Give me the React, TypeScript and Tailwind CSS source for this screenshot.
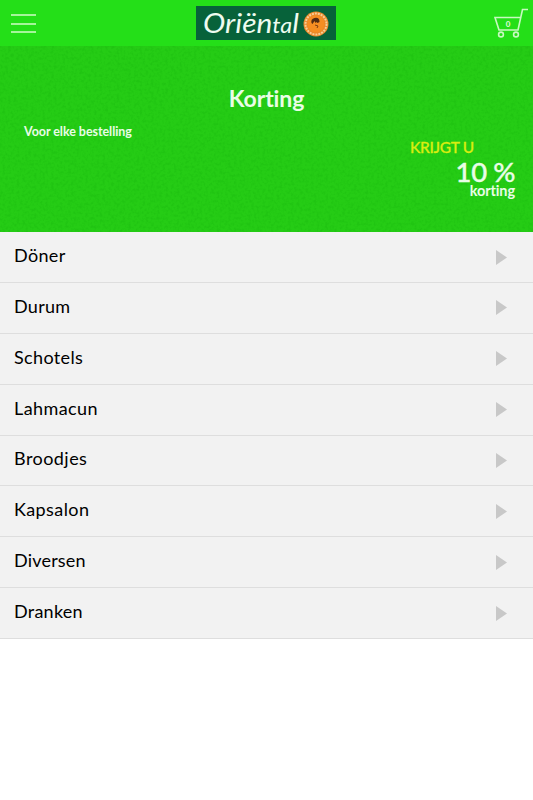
const categories = [
  { name: 'Döner', className: 'tracking-[0.35px]' },
  { name: 'Durum', className: 'tracking-[0.3px]' },
  { name: 'Schotels', className: 'tracking-[0.35px]' },
  { name: 'Lahmacun', className: 'tracking-[0.4px]' },
  { name: 'Broodjes', className: 'tracking-[0.45px]' },
  { name: 'Kapsalon', className: 'tracking-[0.4px]' },
  { name: 'Diversen', className: 'tracking-[0.2px]' },
  { name: 'Dranken', className: 'tracking-[0.25px]' }
];

const Logo = () => (
  <svg width="140" height="34" viewBox="0 0 140 34" className="block bg-[#07623a]">
    <text
      x="7"
      y="26.500"
      fontSize="27"
      fontStyle="italic"
      fontFamily="Lato, sans-serif"
      fontWeight="400"
      fill="#eefcf0"
      textLength="96"
      lengthAdjust="spacingAndGlyphs"
    >
      Oriën<tspan fontSize="21">ta</tspan>l
    </text>
    <circle cx="120" cy="18" r="12.500" fill="#e9892a" />
    <circle cx="120" cy="18" r="10.500" fill="none" stroke="#f8cd94" strokeWidth="2" strokeDasharray="2 1" />
    <circle cx="120" cy="18" r="8.500" fill="#f58e22" />
    <path d="M115.500 17q-1-4 3-5q5-1 5 4l-2 1-1-1-1 1-1-2-2 3z" fill="#502b12" />
    <path d="M119 19l3 1-1 2" fill="none" stroke="#7a3d14" strokeWidth="1" />
  </svg>
);

const Cart = () => (
  <svg width="36" height="32" viewBox="0 0 36 32" fill="none" stroke="#c8f9c1" strokeWidth="1.600">
    <path d="M35 2.500h-5.500L25 23H6L2 10.500h25.500" />
    <circle cx="8" cy="27.500" r="2.400" />
    <circle cx="23" cy="27.500" r="2.400" />
    <text x="15" y="20" textAnchor="middle" fontSize="8" fontWeight="900" fontFamily="Lato, sans-serif" fill="#d6fbd0" stroke="none">
      0
    </text>
  </svg>
);

const App = () => {
  return (
    <div className="min-h-screen bg-white font-['Lato',sans-serif] text-black [font-variant-ligatures:none]">
      {/* Header */}
      <header className="grid h-[45.500px] grid-cols-3 bg-[#24df18]">
        <button className="flex flex-col gap-[6.500px] pl-[11px] pt-[14px]" aria-label="Menu">
          <span className="h-[2px] w-[25px] bg-[#a5f59b]"></span>
          <span className="h-[2px] w-[25px] bg-[#a5f59b]"></span>
          <span className="h-[2px] w-[25px] bg-[#a5f59b]"></span>
        </button>
        <div className="flex justify-center pt-[6px]">
          <Logo />
        </div>
        <div className="flex justify-end pr-[4px] pt-[7px]">
          <Cart />
        </div>
      </header>

      {/* Discount */}
      <section className="relative h-[186.700px] bg-[#25cc15] text-[#e9fde6]">
        <svg className="absolute inset-0 h-full w-full opacity-[0.13]" aria-hidden="true">
          <filter id="grain">
            <feTurbulence type="fractalNoise" baseFrequency="0.35" numOctaves="2" seed="4" />
            <feColorMatrix type="matrix" values="0 0 0 0 0  0 0 0 0 0.3  0 0 0 0 0  3 0 0 0 -1.3" />
          </filter>
          <rect width="100%" height="100%" filter="url(#grain)" />
        </svg>
        <div className="relative pt-[37px]">
          <h1 className="text-center text-[23px] font-bold leading-[30px] tracking-[-0.1px]">Korting</h1>
          <p className="ml-[24px] mt-[10px] text-[12.500px] font-bold leading-[18px] tracking-[-0.05px]">Voor elke bestelling</p>
          <div className="flex flex-col items-end pr-[18px]">
            <p className="-mt-[4px] mr-[41px] text-[15.500px] font-medium leading-[20px] tracking-[-0.3px] text-[#d8ee10] [-webkit-text-stroke:0.300px_#d8ee10]">
              KRIJGT U
            </p>
            <p className="mt-[2px] text-[27.500px] font-medium leading-[26px] tracking-[-0.4px] [-webkit-text-stroke:0.400px_#e9fde6]">10 %</p>
            <p className="-mt-px text-[14.500px] font-bold leading-[14px] tracking-[-0.1px]">korting</p>
          </div>
        </div>
      </section>

      {/* Categories */}
      <ul>
        {categories.map((category) => (
          <li
            key={category.name}
            className="flex h-[50.850px] items-center justify-between border-b border-[#dedede] bg-[#f2f2f2] pl-[14px] pr-[26px]"
          >
            <span className={`pb-[4px] text-[18px] leading-[24px] ${category.className}`}>{category.name}</span>
            <svg width="11" height="15" viewBox="0 0 11 15" fill="#c8c8c8">
              <path d="M0 0l11 7.500L0 15z" />
            </svg>
          </li>
        ))}
      </ul>
    </div>
  );
};

export default App;
